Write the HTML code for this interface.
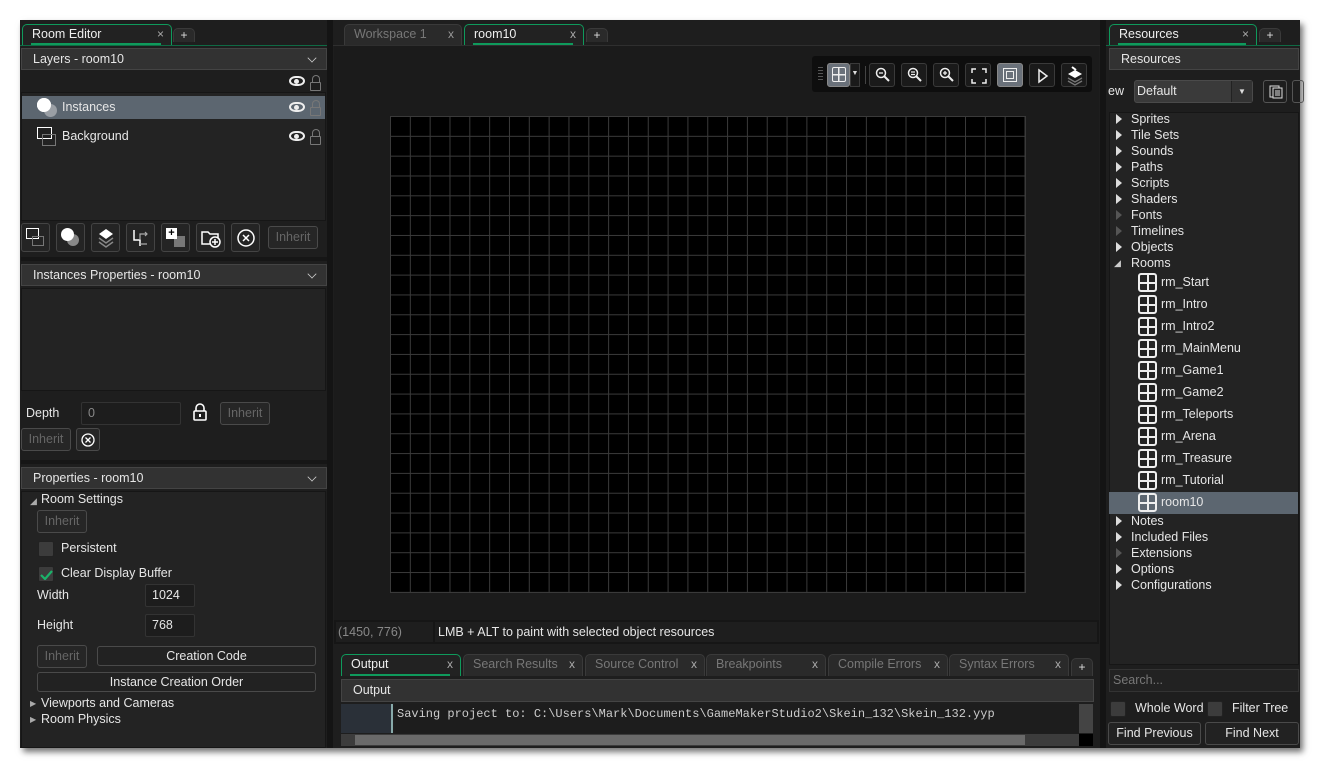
<!DOCTYPE html>
<html><head><meta charset="utf-8">
<style>
*{box-sizing:border-box;margin:0;padding:0}
body{width:1320px;height:768px;background:#fff;position:relative;overflow:hidden;font-family:"Liberation Sans","DejaVu Sans",sans-serif;font-size:12.5px;color:#e6e6e6}
.a{position:absolute}
.win{left:20px;top:20px;width:1280px;height:728px;background:#1e1e1e;box-shadow:3px 4px 6px rgba(0,0,0,.55)}
.tab{background:#2a2a2a;border:1px solid #3a3a3a;border-bottom:none;border-radius:5px 5px 0 0;height:21px;line-height:19px;padding-left:9px;color:#777}
.tab.act{border:1px solid #0f9a5c;border-bottom:none;background:#222;color:#eee}
.tab.act:after{content:"";position:absolute;left:8px;right:10px;bottom:0;height:2px;background:#0f9a5c}
.tab .x{position:absolute;right:7px;top:0;color:#aaa;font-size:12px}
.plus{background:#2a2a2a;border:1px solid #3a3a3a;border-bottom:none;border-radius:5px 5px 0 0;height:14px;width:22px;text-align:center;line-height:12px;font-size:12px;color:#ddd}
.hdr{background:#323232;border:1px solid #444;height:22px;line-height:20px;padding-left:11px;color:#e6e6e6}
.hdr .chev{position:absolute;right:10px;top:5px;width:8px;height:8px;border-right:1.5px solid #ccc;border-bottom:1.5px solid #ccc;transform:rotate(45deg) scale(.8)}
.box{background:#232323;border:1px solid #161616}
.btn{border:1px solid #4a4a4a;border-radius:3px;background:#262626;color:#666;text-align:center;height:23px;line-height:21px}
.btn.w{color:#e6e6e6;background:#222}
.ib{border:1px solid #444;border-radius:3px;background:#242424;width:29px;height:29px}
.inp{background:#1d1d1d;border:1px solid #333;border-radius:2px;height:23px;line-height:21px;padding-left:6px}
.cb{width:16px;height:16px;background:#3c3c3c;border:1px solid #222;border-radius:2px}
.tri{width:0;height:0;border-left:6px solid #ddd;border-top:5px solid transparent;border-bottom:5px solid transparent}
.tree div.t{position:absolute;left:1131px;color:#e6e6e6}
.room{position:absolute;left:1138px;width:19px;height:19px;border:2px solid #eee;border-radius:3px;background:linear-gradient(#eee,#eee) center/2px 100% no-repeat,linear-gradient(#eee,#eee) center/100% 2px no-repeat}
.eye{width:16px;height:10px;border:2px solid #eee;border-radius:50%/60%}
.eye:after{content:"";position:absolute;left:3px;top:1px;width:5px;height:5px;background:#eee;border-radius:50%}
.lock{width:11px;height:9px;border:1.5px solid #777;border-radius:1px}
.lock:before{content:"";position:absolute;left:1px;top:-8px;width:6px;height:7px;border:1.5px solid #777;border-bottom:none;border-radius:4px 4px 0 0}
.tb{width:26px;height:24px;border:1px solid #3a3a3a;border-radius:3px;background:#1a1a1a}
.tb.on{background:#6a717a;border-color:#888}
</style></head><body>
<div class="a win"></div>

<!-- LEFT PANEL -->
<div class="a" style="left:20px;top:46px;width:307px;height:702px;background:#1e1e1e"></div>
<div class="a tab act" style="left:22px;top:24px;width:150px">Room Editor<span class="x">×</span></div>
<div class="a plus" style="left:173px;top:28px">+</div>
<div class="a" style="left:20px;top:45px;width:307px;height:1px;background:#0f6a44"></div>
<div class="a hdr" style="left:21px;top:48px;width:306px">Layers - room10<span class="chev"></span></div>
<div class="a eye" style="left:289px;top:76px"></div><div class="a lock" style="left:310px;top:82px"></div>
<div class="a box" style="left:21px;top:92px;width:305px;height:129px"></div>
<div class="a" style="left:22px;top:96px;width:303px;height:23px;background:#5c6670"></div>
<div class="a" style="left:37px;top:98px;width:14px;height:14px;border-radius:50%;background:#fff"></div>
<div class="a" style="left:44px;top:104px;width:13px;height:13px;border-radius:50%;background:#9a9fa5;z-index:0"></div>
<div class="a" style="left:37px;top:98px;width:14px;height:14px;border-radius:50%;background:#fff"></div>
<div class="a" style="left:62px;top:100px">Instances</div>
<div class="a eye" style="left:289px;top:102px"></div><div class="a lock" style="left:310px;top:107px"></div>
<div class="a" style="left:37px;top:127px;width:15px;height:12px;border:1.5px solid #fff;background:#222"></div>
<div class="a" style="left:42px;top:134px;width:14px;height:12px;border:1px solid #777"></div>
<div class="a" style="left:62px;top:129px">Background</div>
<div class="a eye" style="left:289px;top:131px"></div><div class="a lock" style="left:310px;top:136px"></div>
<!-- toolbar -->
<div class="a ib" style="left:21px;top:223px"><div class="a" style="left:4px;top:4px;width:13px;height:11px;border:1.5px solid #fff"></div><div class="a" style="left:10px;top:12px;width:12px;height:10px;border:1px solid #777"></div></div>
<div class="a ib" style="left:56px;top:223px"><div class="a" style="left:10px;top:10px;width:12px;height:12px;border-radius:50%;background:#888"></div><div class="a" style="left:4px;top:4px;width:13px;height:13px;border-radius:50%;background:#fff"></div></div>
<div class="a ib" style="left:91px;top:223px"><svg class="a" style="left:5px;top:4px" width="18" height="20"><path d="M9 1l7 5-7 5-7-5z" fill="#fff"/><path d="M2 10l7 5 7-5M2 14l7 5 7-5" stroke="#888" fill="none" stroke-width="1.5"/></svg></div>
<div class="a ib" style="left:126px;top:223px"><svg class="a" style="left:4px;top:4px" width="20" height="20"><path d="M3 2v10h6v6" stroke="#fff" fill="none" stroke-width="1.5"/><path d="M9 12V6h7M14 4l2 2-2 2M9 16h7" stroke="#aaa" fill="none" stroke-width="1.2"/></svg></div>
<div class="a ib" style="left:161px;top:223px"><div class="a" style="left:12px;top:12px;width:11px;height:11px;background:#777"></div><div class="a" style="left:4px;top:4px;width:11px;height:11px;background:#fff;color:#000;font-size:11px;line-height:10px;text-align:center;font-weight:bold">+</div></div>
<div class="a ib" style="left:196px;top:223px"><svg class="a" style="left:3px;top:4px" width="22" height="20"><path d="M2 4h6l2 2h8v10H2z" stroke="#fff" fill="none" stroke-width="1.5"/><circle cx="15" cy="14" r="5" fill="#242424" stroke="#fff" stroke-width="1.5"/><path d="M15 11v6M12 14h6" stroke="#fff" stroke-width="1.5"/></svg></div>
<div class="a ib" style="left:231px;top:223px"><svg class="a" style="left:4px;top:4px" width="20" height="20"><circle cx="10" cy="10" r="8" stroke="#fff" fill="none" stroke-width="1.5"/><path d="M7 7l6 6M13 7l-6 6" stroke="#fff" stroke-width="1.5"/></svg></div>
<div class="a btn" style="left:268px;top:226px;width:50px">Inherit</div>
<div class="a" style="left:21px;top:257px;width:306px;height:4px;background:#161616"></div>
<div class="a hdr" style="left:21px;top:264px;width:306px">Instances Properties - room10<span class="chev"></span></div>
<div class="a box" style="left:21px;top:288px;width:305px;height:103px"></div>
<div class="a" style="left:26px;top:406px">Depth</div>
<div class="a inp" style="left:81px;top:402px;width:100px;color:#888">0</div>
<svg class="a" style="left:193px;top:403px" width="14" height="18"><path d="M3 8V5a4 4 0 0 1 8 0v3" stroke="#fff" fill="none" stroke-width="1.6"/><rect x="1" y="8" width="12" height="9" rx="1" stroke="#fff" fill="none" stroke-width="1.6"/><rect x="6" y="11" width="2" height="3" fill="#fff"/></svg>
<div class="a btn" style="left:220px;top:402px;width:50px">Inherit</div>
<div class="a btn" style="left:21px;top:428px;width:50px">Inherit</div>
<div class="a btn" style="left:76px;top:428px;width:24px"><svg class="a" style="left:4px;top:4px" width="14" height="14"><circle cx="7" cy="7" r="6" stroke="#fff" fill="none" stroke-width="1.3"/><path d="M4.5 4.5l5 5M9.5 4.5l-5 5" stroke="#fff" stroke-width="1.3"/></svg></div>
<div class="a" style="left:21px;top:460px;width:306px;height:4px;background:#161616"></div>
<div class="a hdr" style="left:21px;top:467px;width:306px">Properties - room10<span class="chev"></span></div>
<div class="a box" style="left:21px;top:491px;width:305px;height:257px"></div>
<div class="a" style="left:30px;top:496px;font-size:9px;color:#aaa">◢</div>
<div class="a" style="left:41px;top:492px">Room Settings</div>
<div class="a btn" style="left:37px;top:510px;width:50px">Inherit</div>
<div class="a cb" style="left:38px;top:541px"></div><div class="a" style="left:61px;top:541px">Persistent</div>
<div class="a cb" style="left:38px;top:566px"><svg class="a" style="left:1px;top:2px" width="13" height="11"><path d="M1 6l4 4 7-8" stroke="#1bb36a" fill="none" stroke-width="2.2"/></svg></div><div class="a" style="left:61px;top:566px">Clear Display Buffer</div>
<div class="a" style="left:37px;top:588px">Width</div>
<div class="a inp" style="left:145px;top:584px;width:50px">1024</div>
<div class="a" style="left:37px;top:618px">Height</div>
<div class="a inp" style="left:145px;top:614px;width:50px">768</div>
<div class="a btn" style="left:37px;top:645px;width:50px">Inherit</div>
<div class="a btn w" style="left:97px;top:646px;width:219px;height:20px;line-height:18px">Creation Code</div>
<div class="a btn w" style="left:37px;top:672px;width:279px;height:20px;line-height:18px">Instance Creation Order</div>
<div class="a" style="left:30px;top:699px;font-size:8px;color:#aaa">▶</div><div class="a" style="left:41px;top:696px">Viewports and Cameras</div>
<div class="a" style="left:30px;top:715px;font-size:8px;color:#aaa">▶</div><div class="a" style="left:41px;top:712px">Room Physics</div>

<!-- splitter -->
<div class="a" style="left:327px;top:20px;width:6px;height:728px;background:#141414"></div>
<div class="a" style="left:1100px;top:20px;width:6px;height:728px;background:#141414"></div>

<!-- CENTER -->
<div class="a tab" style="left:344px;top:24px;width:118px">Workspace 1<span class="x" style="color:#999">x</span></div>
<div class="a tab act" style="left:464px;top:24px;width:120px">room10<span class="x">x</span></div>
<div class="a plus" style="left:586px;top:28px">+</div>
<div class="a" style="left:333px;top:45px;width:767px;height:1px;background:#2f2f2f"></div>
<div class="a" style="left:334px;top:46px;width:765px;height:574px;background:#1b1b1b"></div>
<div class="a" style="left:812px;top:56px;width:280px;height:36px;background:#0e0e0e;border-radius:3px"></div>
<div class="a" style="left:818px;top:67px;width:5px;height:14px;background:repeating-linear-gradient(#555 0 1px,transparent 1px 3px)"></div>
<div class="a tb on" style="left:827px;top:63px;width:23px"><div class="a" style="left:4px;top:3px;width:14px;height:15px;border:1.5px solid #eee;border-radius:2px;background:linear-gradient(#eee,#eee) center/1.5px 100% no-repeat,linear-gradient(#eee,#eee) center/100% 1.5px no-repeat"></div></div>
<div class="a" style="left:850px;top:63px;width:10px;height:24px;border:1px solid #3a3a3a;background:#1a1a1a;color:#ddd;font-size:7px;text-align:center;line-height:20px">▼</div>
<div class="a" style="left:865px;top:66px;width:1px;height:18px;background:#444"></div>
<div class="a tb" style="left:869px;top:63px"><svg class="a" style="left:5px;top:3px" width="16" height="17"><circle cx="6" cy="6" r="4.5" stroke="#eee" fill="none" stroke-width="1.5"/><path d="M9 9l5 5" stroke="#eee" stroke-width="2"/><path d="M4 6h4" stroke="#eee" stroke-width="1.3"/></svg></div>
<div class="a tb" style="left:901px;top:63px"><svg class="a" style="left:5px;top:3px" width="16" height="17"><circle cx="6" cy="6" r="4.5" stroke="#eee" fill="none" stroke-width="1.5"/><path d="M9 9l5 5" stroke="#eee" stroke-width="2"/><path d="M4 5h4M4 7.5h4" stroke="#eee" stroke-width="1.2"/></svg></div>
<div class="a tb" style="left:933px;top:63px"><svg class="a" style="left:5px;top:3px" width="16" height="17"><circle cx="6" cy="6" r="4.5" stroke="#eee" fill="none" stroke-width="1.5"/><path d="M9 9l5 5" stroke="#eee" stroke-width="2"/><path d="M4 6h4M6 4v4" stroke="#eee" stroke-width="1.3"/></svg></div>
<div class="a tb" style="left:965px;top:63px"><svg class="a" style="left:5px;top:4px" width="16" height="16"><path d="M1 5V1h4M11 1h4v4M15 11v4h-4M5 15H1v-4" stroke="#eee" fill="none" stroke-width="1.5"/></svg></div>
<div class="a tb on" style="left:997px;top:63px"><div class="a" style="left:5px;top:4px;width:14px;height:14px;border:1.5px solid #eee"></div><div class="a" style="left:8px;top:7px;width:8px;height:8px;border:1.5px solid #eee"></div></div>
<div class="a tb" style="left:1029px;top:63px"><svg class="a" style="left:7px;top:4px" width="12" height="16"><path d="M2 2l8 6-8 6z" stroke="#eee" fill="none" stroke-width="1.5"/></svg></div>
<div class="a tb" style="left:1061px;top:63px"><svg class="a" style="left:4px;top:2px" width="18" height="20"><path d="M9 4l7 4-7 4-7-4z" fill="#fff"/><path d="M2 12l7 4 7-4M2 15l7 4 7-4" stroke="#777" fill="none" stroke-width="1.3"/><path d="M6 1l4 3" stroke="#fff" stroke-width="2"/></svg></div>
<!-- grid -->
<div class="a" style="left:390px;top:116px;width:636px;height:477px;background-color:#000;background-image:linear-gradient(90deg,#3a3a3a 1px,transparent 1px),linear-gradient(#3a3a3a 1px,transparent 1px);background-size:19.84px 19.84px;border-right:1px solid #3a3a3a;border-bottom:1px solid #3a3a3a"></div>
<!-- status -->
<div class="a" style="left:334px;top:620px;width:765px;height:24px;background:#161616"></div>
<div class="a" style="left:336px;top:622px;width:97px;height:20px;background:#1e1e1e;color:#888;line-height:20px;padding-left:2px">(1450, 776)</div>
<div class="a" style="left:435px;top:622px;width:662px;height:20px;background:#1e1e1e;line-height:20px;padding-left:3px">LMB + ALT to paint with selected object resources</div>
<div class="a" style="left:334px;top:647px;width:765px;height:101px;background:#1e1e1e"></div>
<div class="a tab act" style="left:341px;top:654px;width:120px;height:22px">Output<span class="x">x</span></div>
<div class="a tab" style="left:463px;top:654px;width:120px;height:22px">Search Results<span class="x">x</span></div>
<div class="a tab" style="left:585px;top:654px;width:120px;height:22px">Source Control<span class="x">x</span></div>
<div class="a tab" style="left:706px;top:654px;width:120px;height:22px">Breakpoints<span class="x">x</span></div>
<div class="a tab" style="left:828px;top:654px;width:120px;height:22px">Compile Errors<span class="x">x</span></div>
<div class="a tab" style="left:949px;top:654px;width:120px;height:22px">Syntax Errors<span class="x">x</span></div>
<div class="a plus" style="left:1071px;top:658px;height:18px;line-height:16px">+</div>
<div class="a hdr" style="left:341px;top:679px;width:753px;height:23px">Output</div>
<div class="a" style="left:341px;top:704px;width:52px;height:29px;background:#2a3038;border-right:2px solid #8aa"></div>
<div class="a" style="left:395px;top:704px;width:684px;height:29px;background:#1d1d1d;font-family:'Liberation Mono',monospace;font-size:12px;line-height:20px;padding-left:2px;color:#ccc">Saving project to: C:\Users\Mark\Documents\GameMakerStudio2\Skein_132\Skein_132.yyp</div>
<div class="a" style="left:1079px;top:704px;width:14px;height:29px;background:#444"></div>
<div class="a" style="left:341px;top:734px;width:738px;height:12px;background:#3c3c3c"></div>
<div class="a" style="left:355px;top:735px;width:670px;height:10px;background:#6a6a6a"></div>
<div class="a" style="left:1079px;top:734px;width:14px;height:12px;background:#000"></div>

<!-- RIGHT -->
<div class="a" style="left:1106px;top:46px;width:194px;height:702px;background:#1e1e1e"></div>
<div class="a tab act" style="left:1109px;top:24px;width:148px">Resources<span class="x">×</span></div>
<div class="a plus" style="left:1259px;top:28px">+</div>
<div class="a" style="left:1106px;top:45px;width:194px;height:1px;background:#0f6a44"></div>
<div class="a hdr" style="left:1109px;top:48px;width:190px">Resources</div>
<div class="a" style="left:1108px;top:84px">ew</div>
<div class="a" style="left:1134px;top:80px;width:119px;height:23px;background:#3a3a3a;border:1px solid #4a4a4a;border-radius:3px;line-height:21px;padding-left:2px">Default</div>
<div class="a" style="left:1231px;top:81px;width:21px;height:21px;background:#333;border-left:1px solid #222;color:#ddd;font-size:8px;text-align:center;line-height:21px">▼</div>
<div class="a" style="left:1263px;top:80px;width:24px;height:23px;border:1px solid #555;border-radius:3px"><svg class="a" style="left:5px;top:4px" width="14" height="14"><rect x="1" y="1" width="9" height="11" stroke="#ddd" fill="none"/><rect x="4" y="3" width="9" height="10" fill="#222" stroke="#ddd"/><path d="M6 6h5M6 8h5M6 10h5" stroke="#ddd"/></svg></div>
<div class="a" style="left:1292px;top:80px;width:12px;height:23px;border:1px solid #555;border-radius:3px"></div>
<div class="a box" style="left:1109px;top:112px;width:190px;height:553px"></div>
<div class="a" style="left:1109px;top:492px;width:189px;height:22px;background:#5c6670"></div>
<div class="tree">
<div class="a tri" style="left:1116px;top:114px"></div><div class="t" style="top:112px">Sprites</div>
<div class="a tri" style="left:1116px;top:130px"></div><div class="t" style="top:128px">Tile Sets</div>
<div class="a tri" style="left:1116px;top:146px"></div><div class="t" style="top:144px">Sounds</div>
<div class="a tri" style="left:1116px;top:162px"></div><div class="t" style="top:160px">Paths</div>
<div class="a tri" style="left:1116px;top:178px"></div><div class="t" style="top:176px">Scripts</div>
<div class="a tri" style="left:1116px;top:194px"></div><div class="t" style="top:192px">Shaders</div>
<div class="a tri" style="left:1116px;top:210px;border-left-color:#555"></div><div class="t" style="top:208px">Fonts</div>
<div class="a tri" style="left:1116px;top:226px;border-left-color:#555"></div><div class="t" style="top:224px">Timelines</div>
<div class="a tri" style="left:1116px;top:242px"></div><div class="t" style="top:240px">Objects</div>
<div class="a" style="left:1114px;top:258px;font-size:9px;color:#ccc">◢</div><div class="t" style="top:256px">Rooms</div>
<div class="room" style="top:273px"></div><div class="t" style="left:1161px;top:275px">rm_Start</div>
<div class="room" style="top:295px"></div><div class="t" style="left:1161px;top:297px">rm_Intro</div>
<div class="room" style="top:317px"></div><div class="t" style="left:1161px;top:319px">rm_Intro2</div>
<div class="room" style="top:339px"></div><div class="t" style="left:1161px;top:341px">rm_MainMenu</div>
<div class="room" style="top:361px"></div><div class="t" style="left:1161px;top:363px">rm_Game1</div>
<div class="room" style="top:383px"></div><div class="t" style="left:1161px;top:385px">rm_Game2</div>
<div class="room" style="top:405px"></div><div class="t" style="left:1161px;top:407px">rm_Teleports</div>
<div class="room" style="top:427px"></div><div class="t" style="left:1161px;top:429px">rm_Arena</div>
<div class="room" style="top:449px"></div><div class="t" style="left:1161px;top:451px">rm_Treasure</div>
<div class="room" style="top:471px"></div><div class="t" style="left:1161px;top:473px">rm_Tutorial</div>
<div class="room" style="top:493px"></div><div class="t" style="left:1161px;top:495px">room10</div>
<div class="a tri" style="left:1116px;top:516px"></div><div class="t" style="top:514px">Notes</div>
<div class="a tri" style="left:1116px;top:532px"></div><div class="t" style="top:530px">Included Files</div>
<div class="a tri" style="left:1116px;top:548px;border-left-color:#555"></div><div class="t" style="top:546px">Extensions</div>
<div class="a tri" style="left:1116px;top:564px"></div><div class="t" style="top:562px">Options</div>
<div class="a tri" style="left:1116px;top:580px"></div><div class="t" style="top:578px">Configurations</div>
</div>
<div class="a" style="left:1109px;top:669px;width:190px;height:23px;background:#222;border:1px solid #333;color:#777;line-height:21px;padding-left:3px">Search...</div>
<div class="a cb" style="left:1110px;top:701px"></div><div class="a" style="left:1135px;top:701px;width:68px;overflow:hidden;white-space:nowrap">Whole Word</div>
<div class="a cb" style="left:1207px;top:701px"></div><div class="a" style="left:1232px;top:701px">Filter Tree</div>
<div class="a btn w" style="left:1108px;top:722px;width:93px">Find Previous</div>
<div class="a btn w" style="left:1205px;top:722px;width:94px">Find Next</div>
</body></html>
